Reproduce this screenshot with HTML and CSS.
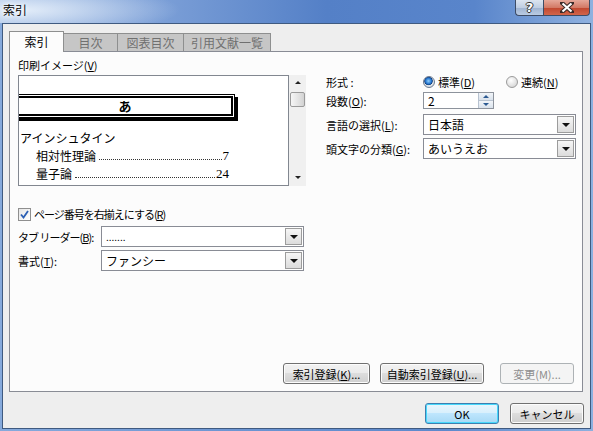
FILE: index.html
```html
<!DOCTYPE html>
<html lang="ja">
<head>
<meta charset="UTF-8">
<title>索引</title>
<link rel="stylesheet" href="styles.css">
</head>
<body>
<div class="window">
  <div class="titlebar">
    <span class="caption">索引</span>
    <div class="caption-buttons">
      <span class="cap-btn help">?</span>
      <span class="cap-btn close">
        <svg width="14" height="11" viewBox="0 0 14 11"><path d="M2 1 L12 10 M12 1 L2 10" stroke="#3a2a28" stroke-width="4.2" stroke-linecap="square"/><path d="M2.5 1.5 L11.5 9.5 M11.5 1.5 L2.5 9.5" stroke="#fff" stroke-width="2.2"/></svg>
      </span>
    </div>
  </div>

  <div class="client">
    <div class="tabs">
      <span class="tab active">索引</span>
      <span class="tab w-toc">目次</span>
      <span class="tab w-fig">図表目次</span>
      <span class="tab w-cite">引用文献一覧</span>
    </div>

    <div class="panel">
      <div class="top">
        <div class="preview-col">
          <div class="label">印刷イメージ(<u>V</u>)</div>
          <div class="preview-wrap">
            <div class="preview">
              <div class="letter-head"><div class="letter-inner">あ</div></div>
              <div class="entry-main">アインシュタイン</div>
              <div class="entry"><span>相対性理論</span><span class="leader"></span><span class="num">7</span></div>
              <div class="entry"><span>量子論</span><span class="leader"></span><span class="num">24</span></div>
            </div>
            <div class="vscroll">
              <span class="arrow up"></span>
              <span class="thumb"></span>
              <span class="arrow down"></span>
            </div>
          </div>
        </div>

        <div class="options">
          <span class="opt-label">形式 :</span>
          <div class="radios">
            <span class="radio checked"><span class="dot"></span>標準(<u>D</u>)</span>
            <span class="radio"><span class="dot"></span>連続(<u>N</u>)</span>
          </div>

          <span class="opt-label r-spin">段数(<u>O</u>):</span>
          <div class="spin r-spin">
            <span class="spin-val">2</span>
            <span class="spin-btns"><span class="spin-up"></span><span class="spin-down"></span></span>
          </div>

          <span class="opt-label r-lang">言語の選択(<u>L</u>):</span>
          <div class="combo r-lang"><span class="combo-val">日本語</span><span class="drop"></span></div>

          <span class="opt-label r-kana">頭文字の分類(<u>G</u>):</span>
          <div class="combo r-kana"><span class="combo-val">あいうえお</span><span class="drop"></span></div>
        </div>
      </div>

      <div class="check-row">
        <span class="checkbox">
          <svg width="9" height="9" viewBox="0 0 9 9"><path d="M1 4.5 L3.5 7.5 L8 1" fill="none" stroke="#2b5fb4" stroke-width="1.8"/></svg>
        </span>
        <span class="check-text">ページ番号を右揃えにする(<u>R</u>)</span>
      </div>

      <div class="field-row first">
        <span class="field-label narrow">タブ リーダー(<u>B</u>):</span>
        <div class="combo wide"><span class="combo-val dots">.......</span><span class="drop"></span></div>
      </div>
      <div class="field-row">
        <span class="field-label">書式(<u>T</u>):</span>
        <div class="combo wide"><span class="combo-val">ファンシー</span><span class="drop"></span></div>
      </div>

      <div class="panel-buttons">
        <span class="btn w-mark">索引登録(<u>K</u>)...</span>
        <span class="btn w-auto">自動索引登録(<u>U</u>)...</span>
        <span class="btn w-edit disabled">変更(M)...</span>
      </div>
    </div>

    <div class="dialog-buttons">
      <span class="btn default">OK</span>
      <span class="btn">キャンセル</span>
    </div>
  </div>
</div>
</body>
</html>
```

FILE: styles.css
```css
* {
    box-sizing: border-box;
}

body {
    margin: 0;
    font-family: "Noto Sans CJK JP", "Noto Sans", sans-serif;
    font-size: 11px;
    color: #000;
}

u {
    text-decoration-thickness: 1px;
    text-underline-offset: 1px;
}

/* window frame */
.window {
    width: 593px;
    height: 431px;
    display: flex;
    flex-direction: column;
    padding: 0 2px 2px;
    background: linear-gradient(90deg, #86aadc 0%, #6c95d2 40%, #5d89cc 75%, #8cb0df 100%);
}

.titlebar {
    height: 23px;
    display: flex;
    justify-content: space-between;
    align-items: flex-start;
    margin: 0 -2px;
    background:
        radial-gradient(ellipse 160px 26px at 20px 10px, rgba(235, 243, 252, 0.9), rgba(235, 243, 252, 0) 100%),
        linear-gradient(90deg, #9db9e2 0%, #7ea1d8 25%, #5480c7 55%, #5985cb 80%, #8fb1df 100%);
}

.caption {
    padding-left: 3px;
    line-height: 20px;
    font-size: 12px;
    text-shadow: 0 0 4px #fff, 0 0 6px #fff;
}

.caption-buttons {
    display: flex;
    margin-right: 3px;
}

.cap-btn {
    height: 16px;
    display: flex;
    align-items: center;
    justify-content: center;
    border: 1px solid #3d4c66;
    border-top: none;
}

.help {
    width: 28px;
    border-radius: 0 0 0 4px;
    border-right: none;
    background: linear-gradient(#dbe4f0 0%, #c0cee2 50%, #9fb3d0 51%, #b9cbe3 100%);
    color: #fff;
    font-family: "DejaVu Sans", sans-serif;
    font-weight: bold;
    font-size: 13px;
    line-height: 14px;
    text-shadow: 1px 0 0 #333, -1px 0 0 #333, 0 1px 0 #333, 0 -1px 0 #333;
}

.close {
    width: 47px;
    border-radius: 0 0 4px 0;
    background: linear-gradient(#e6a89a 0%, #d37a66 50%, #c0462e 51%, #d2654a 100%);
}

.client {
    flex: 1;
    border: 1px solid #3f5a80;
    background: #eeeeee;
    padding: 7px 6px 0;
    display: flex;
    flex-direction: column;
}

/* tab strip */
.tabs {
    display: flex;
    align-items: flex-end;
    height: 20px;
    position: relative;
    z-index: 1;
}

.tab {
    height: 18px;
    line-height: 17px;
    font-size: 12px;
    text-align: center;
    color: #707070;
    background: #c6c6c6;
    border: 1px solid #8e8f8f;
    border-bottom: none;
    border-left: none;
}

.tab.active {
    width: 55px;
    height: 21px;
    margin-bottom: -1px;
    line-height: 19px;
    color: #000;
    background: #fcfcfc;
    border-left: 1px solid #8e8f8f;
    border-right: 1px solid #8e8f8f;
}

.w-toc { width: 54px; }
.w-fig { width: 66px; }
.w-cite { width: 87px; }

/* tab page */
.panel {
    height: 341px;
    margin-right: 1px;
    border: 1px solid #898c95;
    background: #fcfcfc;
    padding: 6px 6px 7px 8px;
    display: flex;
    flex-direction: column;
}

.top {
    display: grid;
    grid-template-columns: 288px 1fr;
    column-gap: 20px;
}

.label {
    line-height: 15px;
}

.preview-wrap {
    display: flex;
    margin-top: 2px;
    height: 111px;
}

.preview {
    width: 271px;
    border: 1px solid #828790;
    background: #fff;
    overflow: hidden;
    padding-top: 18px;
    font-size: 12px;
}

.letter-head {
    width: 220px;
    margin-left: -4px;
    border: 1px solid #000;
    padding: 1px;
    box-shadow: 3px 3px 0 #000;
}

.letter-inner {
    height: 20px;
    border: 2px solid #000;
    text-align: center;
    font-weight: bold;
    line-height: 15px;
    font-size: 13px;
}

.entry-main {
    margin-top: 11px;
    padding-left: 1px;
    line-height: 18px;
}

.entry {
    display: flex;
    align-items: flex-end;
    width: 193px;
    margin-left: 17px;
    line-height: 18px;
}

.leader {
    flex: 1;
    margin: 0 1px 5px 3px;
    border-bottom: 1px dotted #333;
}

.num {
    font-family: "Liberation Serif", serif;
    font-size: 13px;
}

.vscroll {
    width: 17px;
    display: flex;
    flex-direction: column;
    align-items: center;
    background: #f0f0f0;
}

.arrow {
    width: 0;
    height: 0;
    border-left: 3px solid transparent;
    border-right: 3px solid transparent;
}

.arrow.up {
    margin-top: 6px;
    border-bottom: 3px solid #222;
}

.arrow.down {
    margin-top: auto;
    margin-bottom: 7px;
    border-top: 3px solid #222;
}

.thumb {
    width: 15px;
    height: 15px;
    margin-top: 8px;
    border: 1px solid #9a9a9a;
    border-radius: 2px;
    background: linear-gradient(90deg, #f6f6f6, #e2e2e2 60%, #d2d2d2);
}

/* right side options */
.options {
    display: grid;
    grid-template-columns: 97px 1fr;
    align-items: center;
    padding-top: 16px;
    align-content: start;
}

.opt-label {
    line-height: 16px;
    white-space: nowrap;
}

.radios {
    display: flex;
    height: 16px;
    align-items: center;
}

.radio {
    display: flex;
    align-items: center;
    line-height: 16px;
    white-space: nowrap;
}

.radio.checked {
    width: 83px;
}

.dot {
    width: 12px;
    height: 12px;
    margin-right: 3px;
    border: 1px solid #9b9b9b;
    border-radius: 50%;
    background: radial-gradient(circle at 40% 35%, #ffffff, #dcdcdc 70%, #c8c8c8);
}

.radio.checked .dot {
    border-color: #6b7a90;
    background: radial-gradient(circle at 45% 40%, #8fd0ff 0%, #1f6fc9 38%, #13407d 48%, #e2e6ea 56%, #c9ced4 100%);
}

.r-spin { margin-top: 2px; }
.r-lang { margin-top: 5px; }
.r-kana { margin-top: 3px; }

.spin {
    width: 71px;
    height: 17px;
    border: 1px solid #8d939c;
    background: #fff;
    display: flex;
    justify-content: space-between;
}

.spin-val {
    padding-left: 4px;
    line-height: 15px;
    font-size: 12px;
}

.spin-btns {
    width: 15px;
    display: flex;
    flex-direction: column;
    border-left: 1px solid #b7c2d0;
}

.spin-up,
.spin-down {
    flex: 1;
    display: flex;
    align-items: center;
    justify-content: center;
    background: linear-gradient(#f2f5f9, #d9e2ec);
}

.spin-up {
    border-bottom: 1px solid #b7c2d0;
}

.spin-up::after,
.spin-down::after {
    content: "";
    border-left: 3px solid transparent;
    border-right: 3px solid transparent;
}

.spin-up::after { border-bottom: 3px solid #2c5a92; }
.spin-down::after { border-top: 3px solid #2c5a92; }

.combo {
    height: 21px;
    border: 1px solid #898c95;
    background: #fff;
    display: flex;
    align-items: center;
    justify-content: space-between;
    padding-right: 1px;
}

.combo-val {
    padding-left: 4px;
    line-height: 19px;
    font-size: 12px;
}

.combo-val.dots {
    font-size: 10px;
    line-height: 14px;
}

.drop {
    width: 17px;
    height: 17px;
    border: 1px solid #9c9c9c;
    background: linear-gradient(#f6f6f6, #dcdcdc);
    display: flex;
    align-items: center;
    justify-content: center;
}

.drop::after {
    content: "";
    border-left: 4px solid transparent;
    border-right: 4px solid transparent;
    border-top: 4px solid #111;
}

/* lower left block */
.check-row {
    display: flex;
    align-items: center;
    margin-top: 21px;
    line-height: 15px;
}

.check-text {
    letter-spacing: -1px;
}

.checkbox {
    width: 13px;
    height: 13px;
    margin-right: 3px;
    border: 1px solid #8f8f8f;
    background: linear-gradient(135deg, #e6e6e6, #ffffff);
    display: flex;
    align-items: center;
    justify-content: center;
}

.field-row {
    display: flex;
    align-items: center;
    margin-top: 3px;
}

.field-row.first {
    margin-top: 4px;
}

.field-label {
    width: 83px;
    flex: none;
    white-space: nowrap;
}

.field-label.narrow {
    letter-spacing: -1px;
}

.combo.wide {
    width: 203px;
}

/* push buttons */
.btn {
    height: 21px;
    display: flex;
    align-items: center;
    justify-content: center;
    border: 1px solid #707070;
    border-radius: 3px;
    background: linear-gradient(#f2f2f2 0%, #ebebeb 45%, #dddddd 50%, #cfcfcf 100%);
    box-shadow: inset 0 0 0 1px #fcfcfc;
    white-space: nowrap;
}

.panel-buttons {
    margin-top: auto;
    display: flex;
    justify-content: flex-end;
    gap: 10px;
    padding-right: 2px;
}

.w-mark { width: 87px; }
.w-auto { width: 104px; }

.w-edit {
    width: 74px;
    margin-left: 6px;
}

.btn.disabled {
    color: #8d8d8d;
    border-color: #adb2b5;
    background: #f4f4f4;
    box-shadow: none;
}

.dialog-buttons {
    display: flex;
    justify-content: flex-end;
    gap: 11px;
    margin-top: 11px;
}

.dialog-buttons .btn {
    width: 74px;
}

.btn.default {
    border-color: #3c7fb1;
    box-shadow: inset 0 0 0 1px #48d8fb;
    background: linear-gradient(#eaf6fd 0%, #d9f0fc 45%, #bee6fd 50%, #a7d9f5 100%);
}
```
